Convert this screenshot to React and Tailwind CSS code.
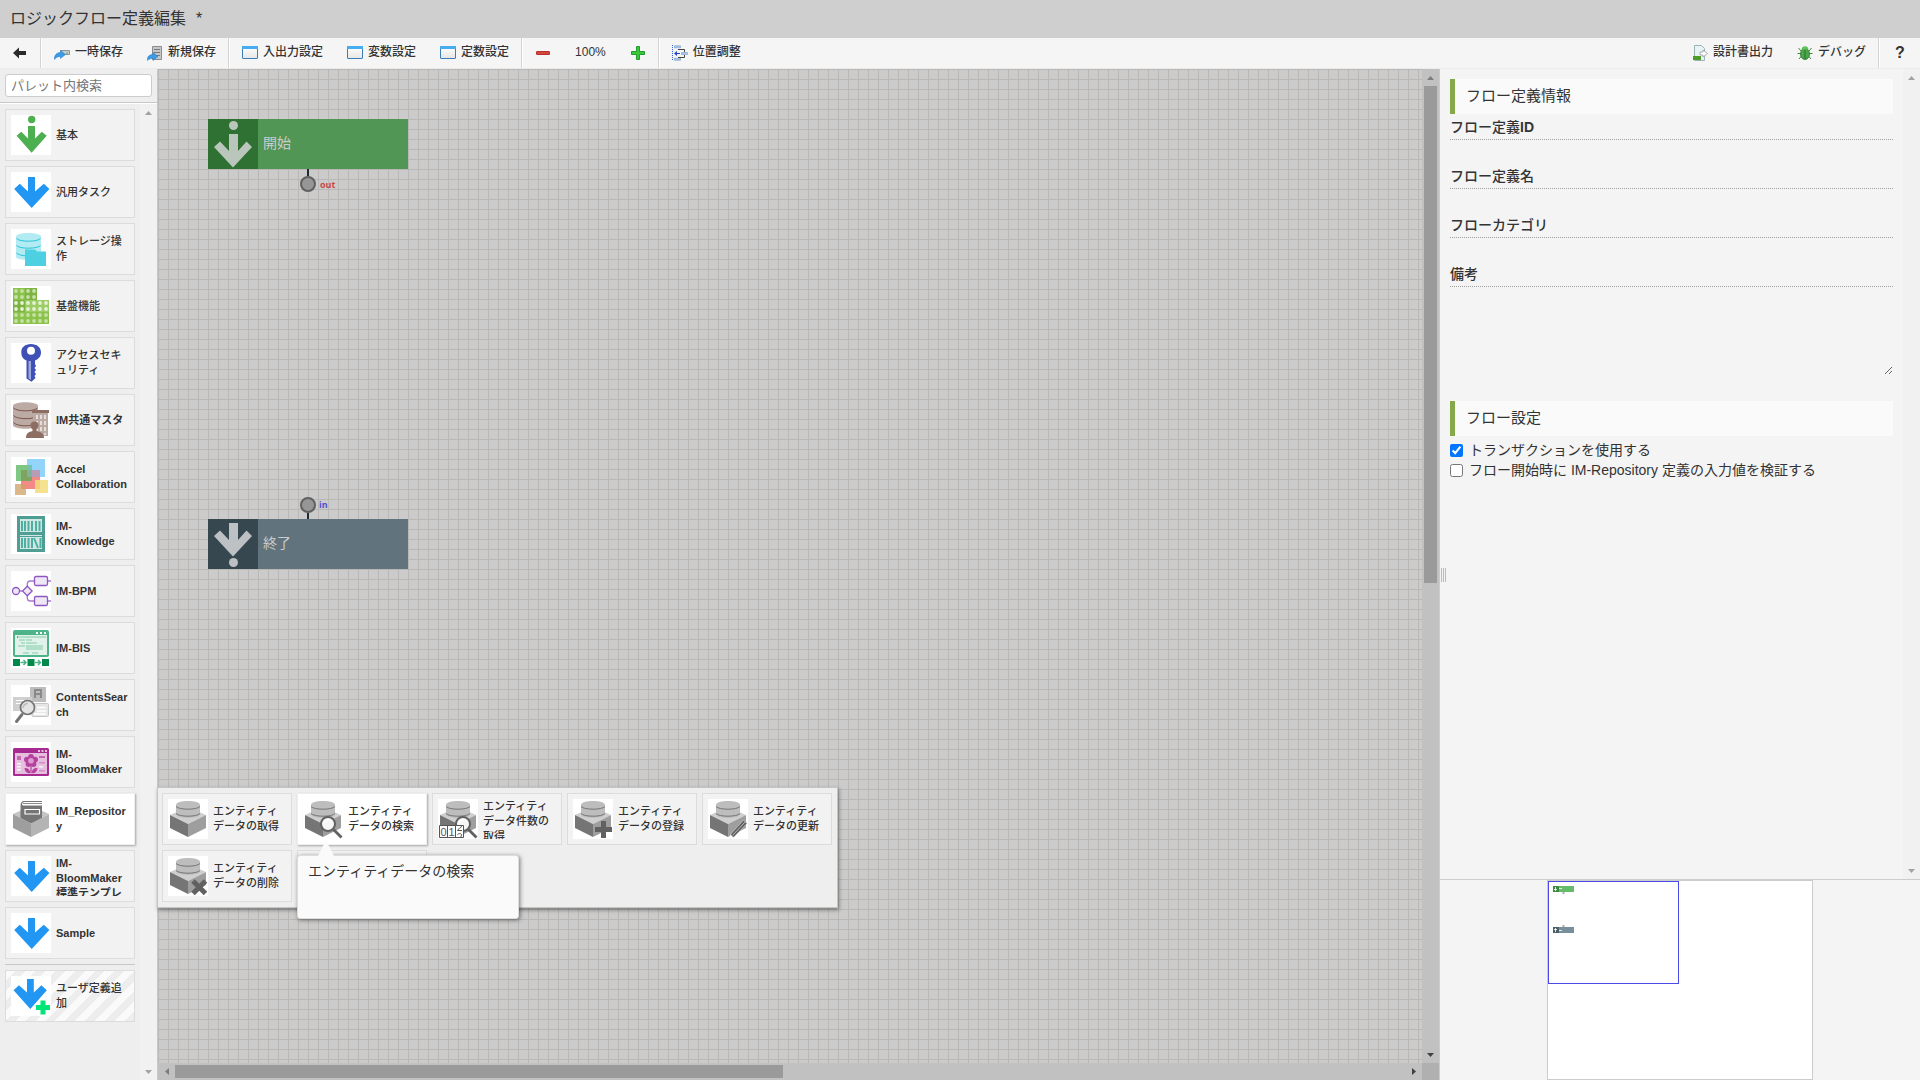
import React from 'react';

// Palette icons (40x40)
const Svg40 = ({ children }) => (
  <svg viewBox="0 0 40 40" className="h-10 w-10 shrink-0 bg-white" aria-hidden="true">
    {children}
  </svg>
);

const BasicIcon = () => (
  <Svg40>
    <g fill="#4caf50">
      <circle cx="20.7" cy="4.5" r="3.7" />
      <path d="M17 11h7v12.5l6.8-6.8 4.9 4-15.1 17-15-17 4.7-4L17 23.5z" />
    </g>
  </Svg40>
);

const TaskIcon = () => (
  <Svg40>
    <path fill="#2196f3" d="M17 5h7v14.5l8.8-7.8 5.6 5.3L20.7 36 3.2 17l5.5-5.3 8.3 7.8z" />
  </Svg40>
);

const UserAddIcon = () => (
  <Svg40>
    <path fill="#2196f3" d="M16 3h6.8v13.5l7.6-7.3 5.4 5L19.3 33 2.6 14.2l5.3-5 8.1 7.3z" />
    <path fill="#00e676" d="M29.5 24.5h5v4.5H39v5h-4.500v4.500h-5V34H25v-5h4.500z" />
  </Svg40>
);

const StorageIcon = () => (
  <Svg40>
    <path fill="#b2ebf2" d="M5 7.500C5 2.800 30 2.800 30 7.500V28c0 4-25 4-25 0z" />
    <path fill="none" stroke="#26c6da" d="M5.500 9.500c3 3.600 21 3.600 24 0M5.500 16.500c3 3.600 21 3.600 24 0M5.500 24c2 2 6 2.600 9 2.800" />
    <path fill="#4dd0e1" d="M14 20.500h10l2 2h9V37H14z" />
  </Svg40>
);

const PlatformIcon = () => {
  const dots = [];
  for (let r = 0; r < 6; r += 1) {
    for (let c = 0; c < (r < 2 ? 4 : 6); c += 1) {
      dots.push(<circle key={`${r}-${c}`} cx={5 + c * 6} cy={5 + r * 6} r="1.9" fill={r > 1 && r < 4 ? '#e4f2d3' : '#c5e1a5'} />);
    }
  }
  return (
    <Svg40>
      <path fill="#8bc34a" d="M2 2h24v12h12v24H2z" />
      <path fill="#7cb342" d="M14 2h12v12H14zM2 14h12v12H2z" />
      <path fill="#9ccc65" d="M14 14h24v12H14z" />
      {dots}
    </Svg40>
  );
};

const KeyIcon = () => (
  <Svg40>
    <path fill="#3f51b5" d="M20 1c6 0 10 3.500 10 8.500 0 4-2.500 6.500-6 8V21l1 2-1.500 2 1.500 2-1.500 2 1.500 2-1.500 2 1 2-4 3.700-5-3.200V17.500c-3.500-1.500-5.200-4-5.200-8C10 4.500 14 1 20 1z" />
    <circle cx="20" cy="7.700" r="4" fill="#fff" />
    <path fill="#9fa8da" d="M17.500 18H20v19l-2.500-1.500z" />
  </Svg40>
);

const MasterIcon = () => (
  <Svg40>
    <path fill="#bcaaa4" d="M2 6C2 1 27 1 27 6v19c0 5-25 5-25 0z" />
    <path fill="none" stroke="#795548" d="M2.500 8c3 3.800 21 3.800 24 0M2.500 15.500c3 3.800 18 3.800 20 2M2.500 22.500c3 3.800 16 3.800 18 2.500" />
    <path fill="#bcaaa4" d="M22 12h15v24H22z" />
    <path fill="#8d6e63" d="M21 10h17v3H21z" />
    <path stroke="#e6dedb" strokeWidth="2" strokeDasharray="4 2" d="M26 15v20M30 15v20M34 15v20" />
    <circle cx="23.500" cy="25.500" r="4" fill="#8d6e63" />
    <path fill="#8d6e63" d="M15 38c0-5 3-6 6.500-7v-4h4v4c4 1 7.500 2 7.500 7z" />
  </Svg40>
);

const CollaborationIcon = () => (
  <Svg40>
    <path fill="#81d4fa" fillOpacity=".85" d="M16 2h18v18H16z" />
    <path fill="#ef5350" fillOpacity=".68" d="M10 13h19v19H10z" />
    <path fill="#4caf50" fillOpacity=".7" d="M5 8h16v16H5z" />
    <path fill="#90caf9" fillOpacity=".4" d="M16 2h18v18H16z" />
    <path fill="#f2dd7a" fillOpacity=".85" d="M24 23h13v13H24z" />
    <path fill="#cda064" fillOpacity=".75" d="M4 27h11v11H4z" />
  </Svg40>
);

const KnowledgeIcon = () => (
  <Svg40>
    <path fill="#4f9e94" d="M6 2h28v36H6z" />
    <path fill="#cfe8e4" d="M9 5h22v13H9zM9 21h22v1H9zM9 23h22v12H9z" />
    <path stroke="#4fae9f" strokeWidth="2" d="M11 7v10M14 7v10M17.500 7v10M21 7v10M25 7v10M28.500 7v10M11 24v10M14 24v10M17.500 24v10M21 24v10M23 24l4 10M29.500 24v10" />
  </Svg40>
);

const BpmIcon = () => (
  <Svg40>
    <g fill="#ede7f6" stroke="#8e57c2" strokeWidth="1.300">
      <path fill="none" stroke="#a57bd0" d="M8.500 20H11M16.300 15.500V13q0-3 3-3H40M16.300 24.500V27q0 3 3 3H40" />
      <circle cx="5" cy="20" r="3.500" />
      <path d="M16.300 15.200l4.800 4.800-4.800 4.800-4.800-4.800z" />
      <rect x="23.500" y="5.500" width="13" height="9" rx="1.500" />
      <rect x="23.500" y="25.500" width="13" height="9" rx="1.500" />
    </g>
  </Svg40>
);

const BisIcon = () => (
  <Svg40>
    <rect x="2" y="2" width="36" height="27" rx="2" fill="#4db388" />
    <path fill="#e0f2ea" d="M4 7h32v20H4z" />
    <path fill="#fff" d="M25 4h2v2h-2zM29 4h2v2h-2zM33 4h2v2h-2z" />
    <path fill="#b2dfca" d="M7 8h28v2H7zM8 11h6v2H8zM15 11h6v2h-6zM10 14h4v2h-4zM15 14h11v2H15zM7 17h7v2H7zM15 17h17v5H15zM12 24h6v2h-6zM21 24h6v2h-6z" />
    <path fill="#4db388" d="M6 8h1v2H6z" />
    <path fill="#00894a" d="M2 31h7v7H2zM16.500 31h7v7h-7zM31 31h7v7h-7z" />
    <path fill="none" stroke="#4db388" strokeWidth="1.500" d="M9.500 34.500H15M12.500 32l2.500 2.500-2.500 2.500M24 34.500h5.500M27 32l2.500 2.500L27 37" />
  </Svg40>
);

const ContentsIcon = () => (
  <Svg40>
    <path fill="#bdbdbd" d="M19 2h16v15H19z" />
    <path fill="none" stroke="#8a8a8a" strokeWidth="2" d="M24 13V5h6v8M24 9h6" />
    <path fill="#d0d0d0" d="M2 12h19v14H2z" />
    <path stroke="#fff" d="M5 15.500h12M5 18.500h8" />
    <rect x="21" y="18.500" width="16.500" height="13" rx="1" fill="#e6e6e6" stroke="#c4c4c4" />
    <path stroke="#fff" strokeWidth="1.500" d="M26 22.500h9M26 26h9M23 29h12" />
    <path stroke="#757575" strokeWidth="3" strokeLinecap="round" d="M11 29.500L5.500 36.500" />
    <circle cx="16.500" cy="22.500" r="7" fill="#e4e4e4" stroke="#757575" strokeWidth="1.700" />
    <path fill="none" stroke="#bdbdbd" strokeWidth="1.500" d="M12 23c.5-3 2-4.500 5-4.500" />
  </Svg40>
);

const BloomIcon = () => (
  <Svg40>
    <rect x="2" y="6" width="36" height="28" rx="1.500" fill="#a62a8f" />
    <path fill="#e6bfdf" d="M4 11h32v21H4z" />
    <path fill="#e6bfdf" d="M27 8h2v2h-2zM30.500 8h2v2h-2zM34 8h2v2h-2z" />
    <path fill="#c568b3" d="M6 14h4v4H6zM28 14h6v2h-6z" />
    <path fill="#fff" fillOpacity=".8" d="M6 21h4v1.500H6zM6 24h4v1.500H6zM6 27h4v1.500H6zM28 24h4v1.500h-4z" />
    <path fill="#d58cc8" d="M28 20h6v1.500h-6zM28 28h6v1.500h-6z" />
    <g fill="#b5429f">
      <circle cx="20" cy="14.800" r="2.900" />
      <circle cx="15.900" cy="17.600" r="2.900" />
      <circle cx="24.100" cy="17.600" r="2.900" />
      <circle cx="17.500" cy="22" r="2.900" />
      <circle cx="22.500" cy="22" r="2.900" />
      <path d="M19.400 23h1.200v8h-1.200z" />
      <path d="M13.500 26c3.500-.3 5.500 1.500 6 5.200-3.500.3-5.800-1.500-6-5.200zM26.500 26c-3.500-.3-5.500 1.500-6 5.200 3.500.3 5.800-1.500 6-5.200z" />
    </g>
    <circle cx="20" cy="18.800" r="2.800" fill="#dc9cd0" />
  </Svg40>
);

const RepositoryIcon = () => (
  <Svg40>
    <path fill="#c4c4c4" d="M20 7l18 8-18 9.500L2 15z" />
    <path fill="#757575" d="M9.500 7q0-4.500 3-5H31v18l-11 4.500L9.500 19z" />
    <path fill="#fff" d="M11 5.500q0-2.500 2-2.500h18v3.500H12z" />
    <path stroke="#8a8a8a" d="M12 4.500h19" />
    <path fill="none" stroke="#fff" strokeWidth="1.200" d="M14 10.500h14.500v4.500H14z" />
    <path fill="#9e9e9e" d="M2 15l18 9.500V38L2 29z" />
    <path fill="#b4b4b4" d="M38 15l-18 9.500V38l18-9z" />
  </Svg40>
);

// Every entity task icon is this box plus an optional overlay
const EntityIcon = ({ children }) => (
  <Svg40>
    <path fill="#cfcfcf" d="M20 8l18 8-18 9L2 16z" />
    <path fill="#757575" d="M2 16l18 9v13L2 29z" />
    <path fill="#9e9e9e" d="M38 16l-18 9v13l18-9z" />
    <path fill="#bdbdbd" d="M8 6C8 .800 32 .800 32 6v9c0 5.200-24 5.200-24 0z" />
    <path fill="none" stroke="#757575" d="M8 7.500c3 3.600 21 3.600 24 0M8 14.500c3 3.600 21 3.600 24 0" />
    {children}
  </Svg40>
);

const Lens = () => (
  <>
    <path stroke="#616161" strokeWidth="2.800" d="M30.500 30.500l8 8" />
    <circle cx="25" cy="25" r="7" fill="#fff" fillOpacity=".9" stroke="#616161" strokeWidth="2" />
  </>
);

const EntitySearchIcon = () => (
  <EntityIcon>
    <Lens />
  </EntityIcon>
);

const EntityCountIcon = () => (
  <EntityIcon>
    <Lens />
    <path fill="#fff" stroke="#555" d="M1.500 26.500h24v12h-24zM9.500 26.500v12M17.500 26.500v12" />
    <g fontSize="11" fill="#555" fontFamily="Liberation Sans">
      <text x="2.500" y="36.500">0</text>
      <text x="10.500" y="36.500">1</text>
    </g>
    <path fill="none" stroke="#555" d="M23.500 27c0 2-4 3-4 4.500h4.500M19.500 36c.5-2 4-2 4 0 0 1-.5 1.500-1 2" />
  </EntityIcon>
);

const EntityAddIcon = () => (
  <EntityIcon>
    <path fill="#616161" d="M28 22h5v6h6v5h-6v6h-5v-6h-6v-5h6z" />
  </EntityIcon>
);

const EntityEditIcon = () => (
  <EntityIcon>
    <path fill="#616161" stroke="#eee" strokeWidth=".5" d="M35.500 21l3.500 3.500L26 38l-4 1.500.800-4.500z" />
    <path stroke="#bdbdbd" d="M37 23L24.500 36.500" />
    <path fill="#fff" d="M22.500 35.500l3 3-4 1z" />
  </EntityIcon>
);

const EntityDeleteIcon = () => (
  <EntityIcon>
    <path stroke="#616161" strokeWidth="5" d="M25 25l12.500 12.500M37.500 25L25 37.500" />
  </EntityIcon>
);

// Toolbar icons (16x16)
const Svg16 = ({ children }) => (
  <svg viewBox="0 0 16 16" className="h-4 w-4 shrink-0" aria-hidden="true">
    {children}
  </svg>
);

const BackIcon = () => (
  <Svg16>
    <path fill="#2b2b2b" d="M1 8l6-5.500V6h7v4H7v3.500z" />
  </Svg16>
);

const SaveIcon = () => (
  <Svg16>
    <path fill="#c9cdd0" stroke="#8d9296" d="M6.500 5.500h9v4H10z" />
    <path stroke="#5faf46" d="M12 8h2" />
    <path fill="#3b9be6" stroke="#1f78c4" strokeWidth=".5" d="M.5 14.500C0 10 3 7.500 6.500 7.500V5.500l5 4-5 4v-2c-3 0-4.500 1-6 3z" />
  </Svg16>
);

const SaveNewIcon = () => (
  <Svg16>
    <path fill="#c4c6c8" stroke="#8a8d90" d="M5.500 1.500h9v13h-9z" />
    <path stroke="#777" d="M7 4.500h6M7 7.500h6M7 10.500h6" />
    <path fill="#3b9be6" stroke="#1f78c4" strokeWidth=".5" d="M.5 15.500C0 11 3 9.500 6 9.500V7.500l5 4-5 4v-2c-3 0-4 .5-5.500 2z" />
  </Svg16>
);

const WindowIcon = () => (
  <Svg16>
    <defs>
      <linearGradient id="win" x1="0" y1="0" x2="0" y2="1">
        <stop offset="0" stopColor="#fff" />
        <stop offset="1" stopColor="#e6e6e6" />
      </linearGradient>
    </defs>
    <rect x=".5" y="1.500" width="15" height="12" rx=".5" fill="url(#win)" stroke="#3a7db8" />
    <path fill="#46aef0" d="M0 1h16v3H0z" />
  </Svg16>
);

const MinusIcon = () => (
  <Svg16>
    <rect x="1.500" y="6.500" width="13" height="3" rx=".5" fill="#d4453f" stroke="#b5322d" />
  </Svg16>
);

const PlusIcon = () => (
  <Svg16>
    <path fill="#3cc63a" stroke="#1e9c2c" d="M6.500 1.500h3v5h5v3h-5v5h-3v-5h-5v-3h5z" />
  </Svg16>
);

const AlignIcon = () => (
  <Svg16>
    <path stroke="#3a5fe0" strokeDasharray="1 1" d="M.5 0v16" />
    <path fill="#a8c4e8" stroke="#7d9dc4" strokeWidth=".6" d="M2.500.8h6v2h-6zM9.500 7.500h6v2h-6zM2.500 13.300h6v2h-6z" />
    <path fill="none" stroke="#444" d="M6 4.500h6.500V7M12.500 10v2.500H6" />
    <path fill="#2448c8" d="M2 8.500L5 6v2h3v1H5v2z" />
  </Svg16>
);

const ExportIcon = () => (
  <Svg16>
    <path fill="#e8f3f5" stroke="#9bb3b8" d="M2.500.5h7l3 3v12h-10z" />
    <path fill="#4c9c28" d="M1 11h8v4H1z" />
    <path fill="#fff" stroke="#9a9a9a" strokeWidth=".8" d="M8 7h3V5l4.500 3.500L11 12v-2H8z" />
  </Svg16>
);

const BugIcon = () => (
  <Svg16>
    <path fill="none" stroke="#3c8a3c" d="M1.500 3L4 6M14.500 3L12 6M.5 8.500h15M2 14l2.500-3M14 14l-2.500-3" />
    <ellipse cx="8" cy="9" rx="4.500" ry="5.500" fill="#4aa648" stroke="#2c7a2e" strokeWidth=".8" />
    <path fill="#5ec45a" d="M4.500 4.500C4.500 0 11.500 0 11.500 4.500z" />
    <path stroke="#2c6e2c" d="M8 5v9" />
  </Svg16>
);

const HelpIcon = () => <span className="w-4 text-center text-base font-bold">?</span>;

const ToolButton = ({ icon: Icon, label, name }) => (
  <button type="button" aria-label={name} className="flex h-full items-center gap-[5px] px-3 text-xs font-medium whitespace-nowrap">
    {Icon && <Icon />}
    {label && <span className="pb-0.5">{label}</span>}
  </button>
);

const Separator = () => <div className="h-full w-0.5 border-l border-[#d4d4d4] bg-white" />;

const Toolbar = () => (
  <div className="flex h-[31px] shrink-0 items-center border-b border-[#ebebeb] bg-[#f5f5f5]">
    <ToolButton icon={BackIcon} name="戻る" />
    <Separator />
    <ToolButton icon={SaveIcon} label="一時保存" />
    <ToolButton icon={SaveNewIcon} label="新規保存" />
    <Separator />
    <ToolButton icon={WindowIcon} label="入出力設定" />
    <ToolButton icon={WindowIcon} label="変数設定" />
    <ToolButton icon={WindowIcon} label="定数設定" />
    <Separator />
    <ToolButton icon={MinusIcon} name="縮小" />
    <ToolButton label="100%" />
    <ToolButton icon={PlusIcon} name="拡大" />
    <Separator />
    <ToolButton icon={AlignIcon} label="位置調整" />
    <div className="flex-1" />
    <ToolButton icon={ExportIcon} label="設計書出力" />
    <ToolButton icon={BugIcon} label="デバッグ" />
    <Separator />
    <ToolButton icon={HelpIcon} name="ヘルプ" />
  </div>
);

const paletteItems = [
  { label: '基本', icon: BasicIcon },
  { label: '汎用タスク', icon: TaskIcon },
  { label: 'ストレージ操作', icon: StorageIcon },
  { label: '基盤機能', icon: PlatformIcon },
  { label: 'アクセスセキュリティ', icon: KeyIcon },
  { label: 'IM共通マスタ', icon: MasterIcon },
  { label: 'Accel Collaboration', icon: CollaborationIcon },
  { label: 'IM-Knowledge', icon: KnowledgeIcon },
  { label: 'IM-BPM', icon: BpmIcon },
  { label: 'IM-BIS', icon: BisIcon },
  { label: 'ContentsSearch', icon: ContentsIcon },
  { label: 'IM-BloomMaker', icon: BloomIcon },
  { label: 'IM_Repository', icon: RepositoryIcon, active: true },
  { label: 'IM-BloomMaker 標準テンプレート', icon: TaskIcon },
  { label: 'Sample', icon: TaskIcon },
];

const entityItems = [
  { label: 'エンティティデータの取得', icon: EntityIcon },
  { label: 'エンティティデータの検索', icon: EntitySearchIcon, active: true },
  { label: 'エンティティデータ件数の取得', icon: EntityCountIcon },
  { label: 'エンティティデータの登録', icon: EntityAddIcon },
  { label: 'エンティティデータの更新', icon: EntityEditIcon },
  { label: 'エンティティデータの削除', icon: EntityDeleteIcon },
];

const PaletteItem = ({ icon: Icon, label, active, striped }) => {
  let look = 'border-[#dcdcdc] bg-[#f2f2f2]';
  if (active) look = 'border-[#eee] bg-white shadow-[1px_1px_2px_rgba(0,0,0,0.3)]';
  if (striped) look = 'border-[#dcdcdc] bg-[repeating-linear-gradient(135deg,#fafafa_0px,#fafafa_7px,#ededed_7px,#ededed_14px)]';
  const weight = /^[A-Z]/.test(label) ? 'font-bold' : 'font-medium';
  return (
    <button type="button" className={`flex h-[52px] w-[130px] shrink-0 items-center gap-[5px] border p-[5px] text-left ${look}`}>
      <Icon />
      <span className={`max-h-10 min-w-0 flex-1 overflow-hidden text-[11px] leading-[15px] wrap-anywhere ${weight}`}>{label}</span>
    </button>
  );
};

const Arrow = ({ dir, className }) => {
  const shapes = {
    up: 'M5 11h7L8.500 7z',
    down: 'M5 7h7l-3.500 4z',
    left: 'M11 5v7L7 8.500z',
    right: 'M7 5v7l4-3.500z',
  };
  return (
    <svg viewBox="0 0 17 17" className={`h-[17px] w-[17px] shrink-0 ${className}`} fill="currentColor" aria-hidden="true">
      <path d={shapes[dir]} />
    </svg>
  );
};

const Palette = () => (
  <aside className="flex w-[158px] shrink-0 flex-col border-r border-[#c8c8c8] bg-[#eee]">
    <div className="border-b border-[#c8c8c8] px-[5px] pt-[5px] pb-[5px]">
      <input
        type="text"
        aria-label="パレット内検索"
        placeholder="パレット内検索"
        className="block h-[23px] w-[147px] rounded-[3px] border border-[#ccc] bg-white px-[5px] pb-px text-[13px] placeholder:text-[#757575]"
      />
    </div>
    <div className="flex min-h-0 flex-1 border-t border-white">
      <div className="flex min-w-0 flex-1 flex-col gap-[5px] overflow-hidden px-[5px] pt-[5px]">
        {paletteItems.map((item) => (
          <PaletteItem key={item.label} {...item} />
        ))}
        <div className="h-px w-[130px] shrink-0 bg-[#c8c8c8]" />
        <PaletteItem icon={UserAddIcon} label="ユーザ定義追加" striped />
      </div>
      <div className="flex w-[17px] flex-col justify-between bg-[#f1f1f1] text-[#a3a3a3]">
        <Arrow dir="up" />
        <Arrow dir="down" />
      </div>
    </div>
  </aside>
);

const StartNode = () => (
  <div className="absolute top-[50px] left-[50px] flex h-[50px] w-[200px] items-center bg-[#529655] text-sm text-[#ccc]">
    <svg viewBox="0 0 50 50" className="h-full w-[50px] bg-[#2e7133]" fill="#bac6bb" aria-hidden="true">
      <circle cx="25.500" cy="6.500" r="4.500" />
      <path d="M21 15h9v17l8.500-9.500L44 28 25 48.500 6 28l6-5.500L21 32z" />
    </svg>
    <span className="pb-0.5 pl-[5px]">開始</span>
    <div className="absolute top-full left-1/2 flex -translate-x-1/2 flex-col items-center">
      <div className="h-[7px] w-0.5 bg-[#1c2b2e]" />
      <div className="h-4 w-4 rounded-full border-2 border-[#606060] bg-[#969696]" />
    </div>
    <span className="absolute top-[60px] left-28 font-['Open_Sans','Noto_Sans',sans-serif] text-[9px] leading-3 font-bold text-[#cc4646]">out</span>
  </div>
);

const EndNode = () => (
  <div className="absolute top-[450px] left-[50px] flex h-[50px] w-[200px] items-center bg-[#61737c] text-sm text-[#ccc]">
    <svg viewBox="0 0 50 50" className="h-full w-[50px] bg-[#37474f]" fill="#bec1c3" aria-hidden="true">
      <path d="M21 4h9v17l8.500-9.500L44 17 25 37.500 6 17l6-5.500L21 21z" />
      <circle cx="25.500" cy="43.500" r="4.500" />
    </svg>
    <span className="pb-0.5 pl-[5px]">終了</span>
    <div className="absolute bottom-full left-1/2 flex -translate-x-1/2 flex-col items-center">
      <div className="h-4 w-4 rounded-full border-2 border-[#606060] bg-[#969696]" />
      <div className="h-1.5 w-0.5 bg-[#1c2b2e]" />
    </div>
    <span className="absolute -top-5 left-[111px] font-['Open_Sans','Noto_Sans',sans-serif] text-[9px] leading-3 font-bold text-[#5050d0]">in</span>
  </div>
);

const EntityPopup = () => (
  <div className="absolute top-[718px] -left-px w-[681px] border border-[#c4c4c4] bg-[#eee] px-1 py-[5px] shadow-[1px_2px_4px_rgba(0,0,0,0.4)]">
    <div className="flex flex-wrap gap-[5px]">
      {entityItems.map((item) => (
        <PaletteItem key={item.label} {...item} />
      ))}
      <div className="h-[52px] w-[130px] border border-[#dcdcdc] bg-[#f2f2f2]" />
    </div>
    <div className="absolute top-[67px] left-[139px] h-16 w-[222px] rounded-[3px] border border-[#ddd] bg-[#fafafa] px-2.5 py-[5px] text-sm shadow-[1px_1px_4px_rgba(0,0,0,0.5)]">
      エンティティデータの検索
      <svg viewBox="0 0 16 16" className="absolute -top-4 left-5 h-4 w-4" aria-hidden="true">
        <path fill="#fafafa" d="M8 0l8 16H0z" />
      </svg>
    </div>
  </div>
);

const Canvas = () => (
  <main className="relative flex min-w-0 flex-1 flex-col">
    <div className="flex min-h-0 flex-1">
      <div className="relative min-w-0 flex-1 overflow-hidden bg-[#cbcbcb] bg-[linear-gradient(to_right,#bab7b4_1px,transparent_1px),linear-gradient(to_bottom,#bab7b4_1px,transparent_1px)] bg-size-[10px_10px]">
        <StartNode />
        <EndNode />
      </div>
      <div className="flex w-[17px] flex-col bg-[#c1c1c1]">
        <Arrow dir="up" className="text-[#7c7c7c]" />
        <div className="mx-0.5 h-1/2 bg-[#9a9a9a]" />
        <div className="flex-1" />
        <Arrow dir="down" className="text-[#404040]" />
      </div>
    </div>
    <div className="flex h-[17px] bg-[#c1c1c1]">
      <Arrow dir="left" className="text-[#7c7c7c]" />
      <div className="my-0.5 w-[47.5%] bg-[#9a9a9a]" />
      <div className="flex-1" />
      <Arrow dir="right" className="text-[#404040]" />
      <div className="w-[17px] bg-[#b0b0b0]" />
    </div>
    <EntityPopup />
  </main>
);

const SectionTitle = ({ children }) => (
  <h2 className="flex h-[35px] items-center border-l-[5px] border-[#84a84a] bg-[#fafafa] pl-[11px] text-[15px]">{children}</h2>
);

const fieldLabel = 'block h-[25px] border-b border-dotted border-[#a0a0a0] text-sm leading-6 font-medium';

const Field = ({ id, label }) => (
  <div className="flex h-[49px] flex-col">
    <label htmlFor={id} className={fieldLabel}>
      {label}
    </label>
    <input id={id} type="text" className="h-6 w-full bg-transparent text-sm outline-none" />
  </div>
);

const Minimap = () => (
  <div className="flex justify-center border-t border-[#ccc] bg-[#f4f4f4]">
    <div className="relative h-[200px] w-[266px] border border-[#ccc] bg-white">
      <div className="h-[103px] w-[131px] border border-[#4a4ae8]">
        <svg viewBox="0 0 129 101" className="h-full w-full" aria-hidden="true">
          <path fill="#66bb6a" d="M4 4h21v6H4z" />
          <path fill="#3a8a3f" d="M4 4h6v6H4z" />
          <path fill="#78909c" d="M4 45h21v6H4z" />
          <path fill="#4c606a" d="M4 45h6v6H4z" />
          <path stroke="#fff" strokeOpacity=".8" d="M6.500 5v4M5 7.500h3M10 6.500h3M6.500 46v4M5 47.500h3M10 48.500h3" />
          <path fill="#aaa" d="M13.500 10h2v2h-2zM13.500 43h2v2h-2z" />
        </svg>
      </div>
    </div>
  </div>
);

const SettingsPanel = () => (
  <aside className="relative flex w-[481px] shrink-0 flex-col border-l border-[#ccc] bg-[#f4f4f4]">
    <div className="flex min-h-0 flex-1">
      <div className="min-w-0 flex-1 px-2.5 pt-2.5">
        <SectionTitle>フロー定義情報</SectionTitle>
        <div className="pt-px">
          <Field
            id="flow-id"
            label={
              <>
                フロー定義<b>ID</b>
              </>
            }
          />
          <Field id="flow-name" label="フロー定義名" />
          <Field id="flow-category" label="フローカテゴリ" />
          <label htmlFor="flow-note" className={fieldLabel}>
            備考
          </label>
          <textarea id="flow-note" className="mb-[26px] block h-[88px] w-full resize bg-transparent text-sm outline-none" />
        </div>
        <SectionTitle>フロー設定</SectionTitle>
        <div className="flex flex-col pt-1 text-sm leading-5">
          <label className="flex items-center gap-1.5">
            <input type="checkbox" defaultChecked className="h-[13px] w-[13px]" />
            トランザクションを使用する
          </label>
          <label className="flex items-center gap-1.5">
            <input type="checkbox" className="h-[13px] w-[13px]" />
            フロー開始時に IM-Repository 定義の入力値を検証する
          </label>
        </div>
      </div>
      <div className="flex w-[17px] flex-col justify-between bg-[#f1f1f1] text-[#a3a3a3]">
        <Arrow dir="up" />
        <Arrow dir="down" />
      </div>
    </div>
    <Minimap />
    {/* splitter grip */}
    <div className="absolute top-[499px] left-px flex h-3.5 gap-px">
      <div className="w-px bg-[#bbb]" />
      <div className="w-px bg-[#bbb]" />
      <div className="w-px bg-[#bbb]" />
    </div>
  </aside>
);

function App() {
  return (
    <div className="flex h-screen flex-col overflow-hidden font-['Liberation_Sans','Noto_Sans_CJK_JP',sans-serif] text-[#333]">
      <header className="flex h-[38px] shrink-0 items-center gap-2.5 bg-[#cfcfcf] px-2.5 pb-px">
        <h1 className="text-base">ロジックフロー定義編集</h1>
        <span className="text-base">*</span>
      </header>
      <Toolbar />
      <div className="flex min-h-0 flex-1">
        <Palette />
        <Canvas />
        <SettingsPanel />
      </div>
    </div>
  );
}

export default App;
